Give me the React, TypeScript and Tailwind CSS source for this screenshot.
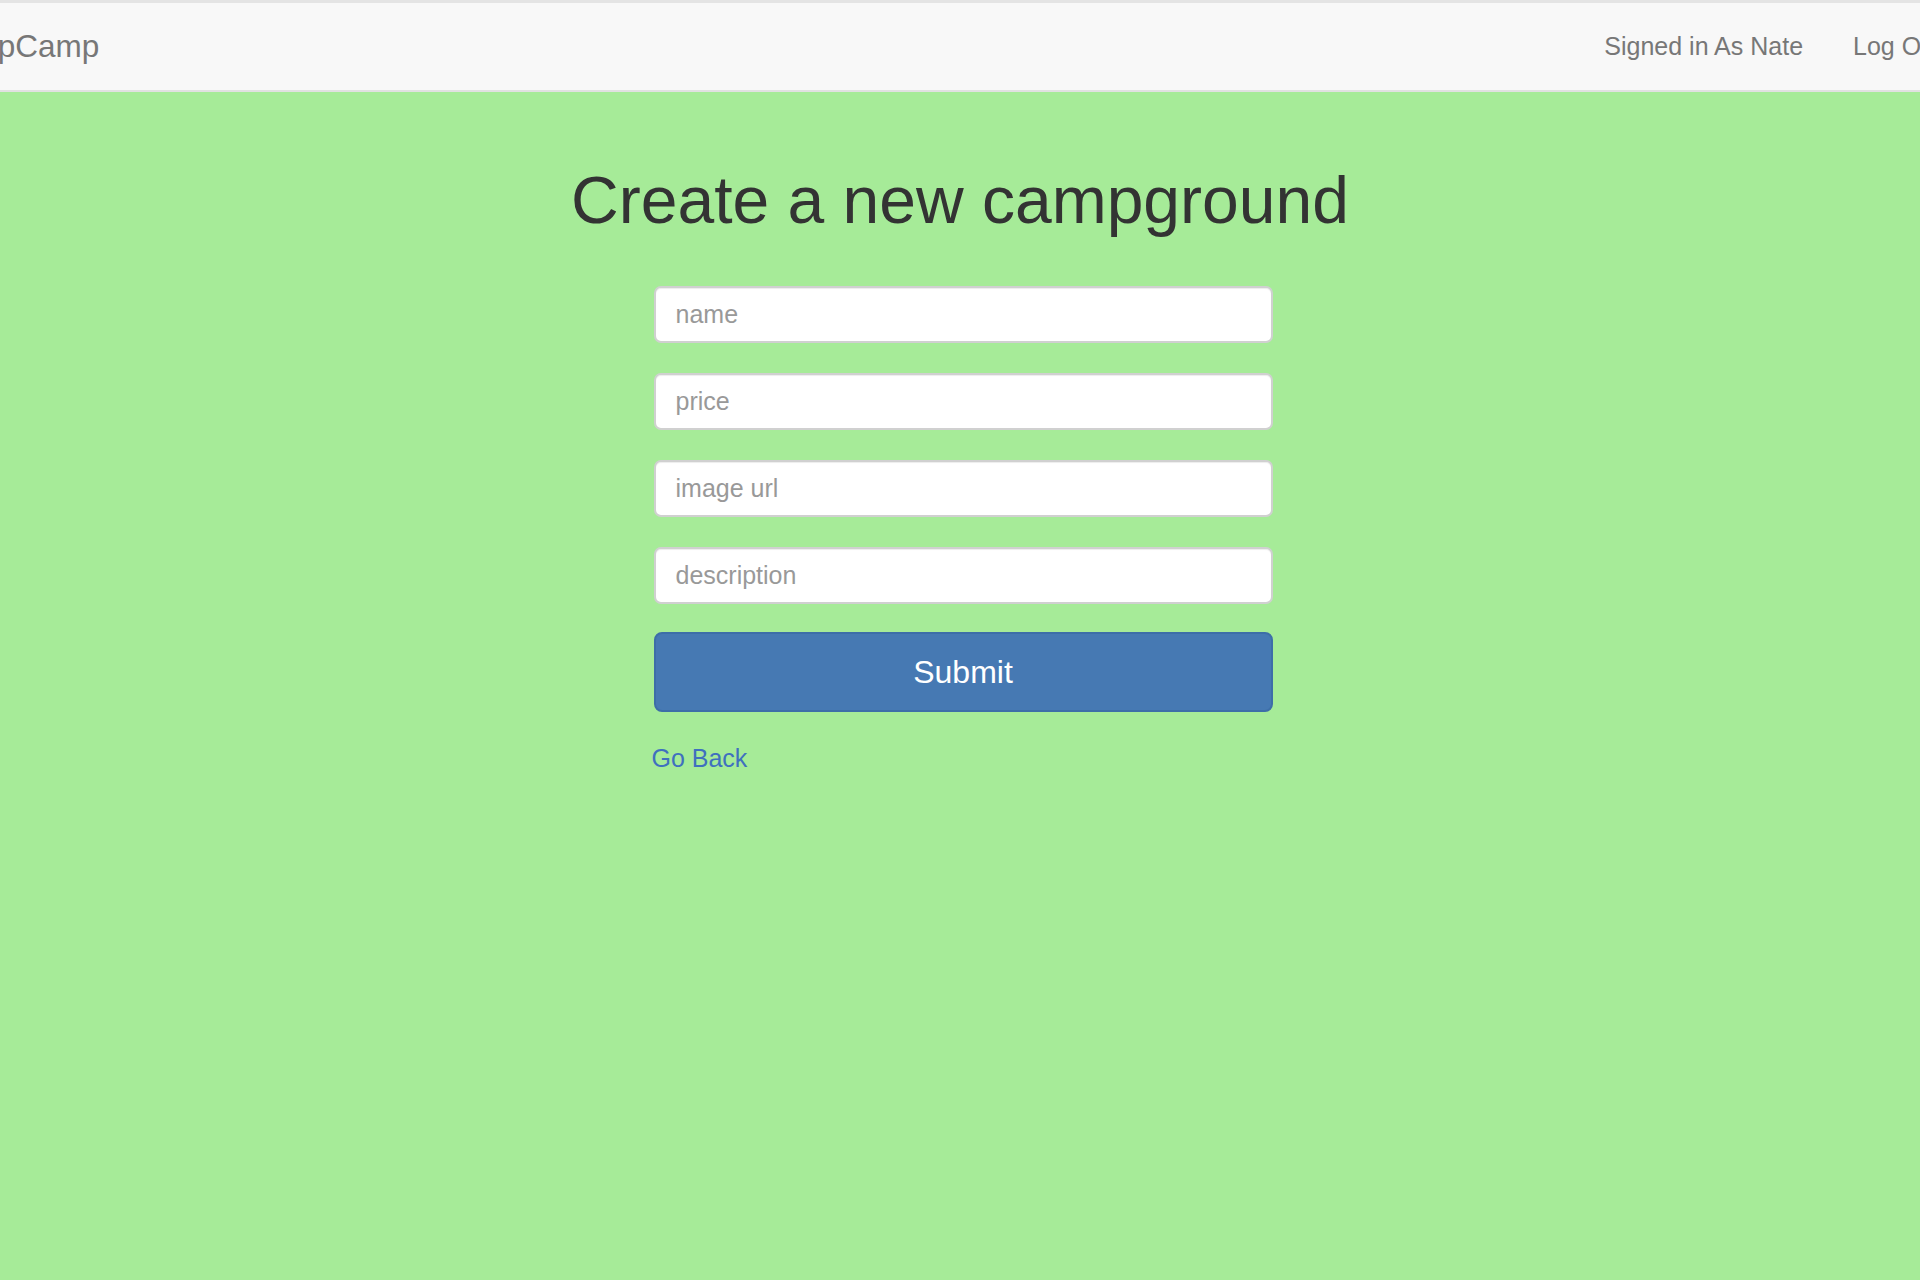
import React from "react";

export default function App() {
  const fields = ["name", "price", "image url", "description"];
  return (
    <div
      className="min-h-[1280px] w-full bg-[#a6eb98] overflow-hidden"
      style={{ fontFamily: '"Liberation Sans", Arial, Helvetica, sans-serif' }}
    >
      <nav className="h-[92px] bg-[#f8f8f8] border-t-[3px] border-b-2 border-t-[#e4e4e4] border-b-[#e1e1e1] flex items-center justify-between overflow-hidden">
        <a className="-ml-[45px] text-[31.5px] text-[#777] leading-none whitespace-nowrap">YelpCamp</a>
        <div className="flex items-center -mr-[47px] whitespace-nowrap">
          <a className="px-[25px] text-[25px] text-[#777] leading-none">Signed in As Nate</a>
          <a className="px-[25px] text-[25px] text-[#777] leading-none">Log Out</a>
        </div>
      </nav>
      <div className="flex flex-col items-center pt-[72px]">
        <h1 className="text-[66px] leading-[1.1] text-[#333] font-normal">Create a new campground</h1>
        <form className="w-[619px] ml-[6px] mt-[49px] flex flex-col">
          {fields.map((f) => (
            <input
              key={f}
              placeholder={f}
              className="h-[57px] mb-[30px] w-full bg-white border-2 border-[#d0d0d0] rounded-[7px] px-[20px] text-[25px] text-[#555] placeholder:text-[#999] shadow-[inset_0_1px_1px_rgba(0,0,0,0.075)] outline-none"
            />
          ))}
          <button
            type="button"
            className="h-[80px] -mt-[2px] w-full bg-[#4679b3] border-2 border-[#3d6ea8] rounded-[8px] text-white text-[32px]"
          >
            Submit
          </button>
          <a className="mt-[29px] -ml-[2px] text-[25px] leading-[34px] text-[#3f70bf] self-start">Go Back</a>
        </form>
      </div>
    </div>
  );
}
